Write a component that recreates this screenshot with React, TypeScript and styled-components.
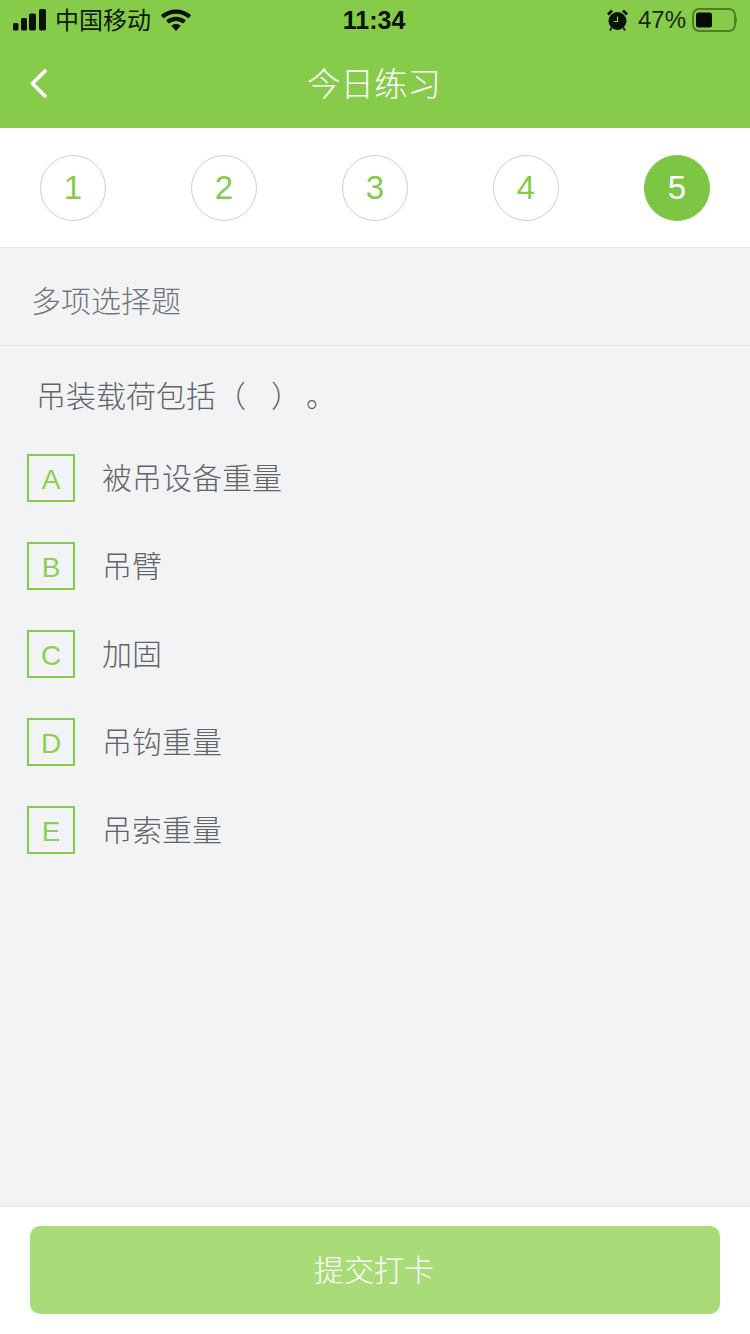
import React from 'react';
import styled, { createGlobalStyle } from 'styled-components';

const GREEN = '#86cc4a';
const FONT = '"Liberation Sans", Arial, "Noto Sans CJK SC", sans-serif';

const GlobalStyle = createGlobalStyle`
    html, body {
        margin: 0;
        padding: 0;
        background: #f2f3f5;
        font-family: ${FONT};
    }
    * {
        box-sizing: border-box;
    }
`;

const Page = styled.div`
    width: 750px;
    height: 1334px;
    display: flex;
    flex-direction: column;
    background: #f2f3f5;
    overflow: hidden;
`;

const Header = styled.header`
    height: 128px;
    flex: none;
    background: ${GREEN};
    display: flex;
    flex-direction: column;
`;

const StatusBar = styled.div`
    height: 40px;
    padding: 0 13px;
    display: grid;
    grid-template-columns: 1fr auto 1fr;
    align-items: center;
    color: #0c1a04;
`;

const StatusLeft = styled.div`
    display: flex;
    align-items: center;
`;

const StatusRight = styled.div`
    display: flex;
    align-items: center;
    justify-content: flex-end;
`;

const Carrier = styled.span`
    font-size: 24px;
    margin: 0 10px 4px 9px;
    font-weight: 400;
`;

const Clock = styled.span`
    font-size: 25px;
    font-weight: 700;
    color: #0a1205;
    margin-right: 2px;
`;

const Percent = styled.span`
    font-size: 24px;
    margin: 0 4px 0 10px;
    color: #16280a;
`;

const TitleBar = styled.div`
    flex: 1;
    display: flex;
    align-items: center;
    justify-content: center;
    padding: 0 2px 6px 0;
    position: relative;
`;

const BackIcon = styled.svg`
    position: absolute;
    left: 28px;
    top: 26px;
`;

const Title = styled.h1`
    margin: 0;
    font-size: 33.5px;
    font-weight: 300;
    color: #fff;
`;

const Steps = styled.div`
    height: 120px;
    flex: none;
    background: #fff;
    border-bottom: 1px solid #e6e7e9;
    padding: 27px 40px 0;
    display: flex;
    justify-content: space-between;
    align-items: flex-start;
`;

const Step = styled.div<{ $active?: boolean }>`
    width: 66px;
    height: 66px;
    border-radius: 50%;
    display: flex;
    align-items: center;
    justify-content: center;
    font-size: 33px;
    color: ${(p) => (p.$active ? '#fff' : '#84ca4c')};
    background: ${(p) => (p.$active ? '#7cc644' : '#fff')};
    border: 1px solid ${(p) => (p.$active ? '#7cc644' : '#cfcfcf')};
`;

const SectionLabel = styled.div`
    height: 98px;
    flex: none;
    padding: 5px 32px 0 31px;
    display: flex;
    align-items: center;
    font-size: 30px;
    font-weight: 300;
    color: #737577;
    border-bottom: 1px solid #e6e7e9;
`;

const Question = styled.div`
    padding: 33px 36px 0;
    height: 108px;
    flex: none;
    font-size: 30px;
    font-weight: 300;
    line-height: 36px;
    color: #626466;
`;

const Stop = styled.span`
    margin-left: 20px;
`;

const Options = styled.div`
    flex: 1;
    padding: 0 27px;
    display: flex;
    flex-direction: column;
    gap: 40px;
`;

const Option = styled.div`
    display: flex;
    align-items: center;
    height: 48px;
`;

const OptionLetter = styled.div`
    width: 48px;
    height: 48px;
    flex: none;
    border: 2px solid #86cc4a;
    padding-top: 4px;
    display: flex;
    align-items: center;
    justify-content: center;
    font-size: 28px;
    color: #8ccf55;
`;

const OptionText = styled.span`
    margin: 0 0 4px 27px;
    font-size: 30px;
    font-weight: 300;
    color: #626466;
`;

const Footer = styled.footer`
    height: 128px;
    flex: none;
    background: #fff;
    border-top: 1px solid #e6e7e9;
    padding: 19px 30px 20px;
`;

const SubmitButton = styled.button`
    width: 100%;
    height: 88px;
    border: none;
    border-radius: 10px;
    padding: 0 2px 4px 0;
    background: #a9dc78;
    color: #fff;
    font-family: ${FONT};
    font-size: 30px;
    font-weight: 300;
`;

const SignalIcon = () => (
    <svg width="33" height="22" viewBox="0 0 33 22">
        <rect x="0" y="14" width="5.5" height="7.5" rx="1.5" fill="#0a1205" />
        <rect x="8" y="9" width="6" height="12.5" rx="1.5" fill="#0a1205" />
        <rect x="16" y="4.5" width="7" height="17" rx="1.8" fill="#0a1205" />
        <rect x="26" y="0" width="7" height="21.5" rx="1.8" fill="#0a1205" />
    </svg>
);

const WifiIcon = () => (
    <svg width="30" height="22" viewBox="0 0 30 22">
        <path d="M1.2 7.8C9 0.8 21 0.8 28.8 7.8" fill="none" stroke="#0a1205" strokeWidth="4.2" />
        <path d="M6.5 13C11.5 8.8 18.5 8.8 23.5 13" fill="none" stroke="#0a1205" strokeWidth="4.2" />
        <path d="M10.2 16.8C13 14.3 17 14.3 19.8 16.8L15 22Z" fill="#0a1205" />
    </svg>
);

const AlarmIcon = () => (
    <svg width="21" height="22" viewBox="0 0 21 22">
        <circle cx="10.5" cy="12" r="9" fill="#0a1205" />
        <path d="M10.5 7.5V12.5H6.5" fill="none" stroke="#86cc4a" strokeWidth="1.2" />
        <path d="M1 5.5L5 1.5M20 5.5L16 1.5" stroke="#0a1205" strokeWidth="2.8" />
        <path d="M4.5 19L3 21.5M16.5 19L18 21.5" stroke="#0a1205" strokeWidth="1.8" />
    </svg>
);

const BatteryIcon = () => (
    <svg width="47" height="24" viewBox="0 0 47 24">
        <rect x="3" y="1" width="42" height="22" rx="6" fill="none" stroke="#4d7f29" strokeWidth="2" />
        <rect x="6" y="4.5" width="16" height="15" rx="2.5" fill="#060a03" />
        <path d="M46.4 9.5C47 10.5 47 13.5 46.4 14.5" fill="none" stroke="#4d7f29" strokeWidth="1.4" />
    </svg>
);

const steps = [1, 2, 3, 4, 5];

const options = [
    { letter: 'A', text: '被吊设备重量' },
    { letter: 'B', text: '吊臂' },
    { letter: 'C', text: '加固' },
    { letter: 'D', text: '吊钩重量' },
    { letter: 'E', text: '吊索重量' },
];

const App = () => {
    return (
        <Page>
            <GlobalStyle />
            <Header>
                <StatusBar>
                    <StatusLeft>
                        <SignalIcon />
                        <Carrier>中国移动</Carrier>
                        <WifiIcon />
                    </StatusLeft>
                    <Clock>11:34</Clock>
                    <StatusRight>
                        <AlarmIcon />
                        <Percent>47%</Percent>
                        <BatteryIcon />
                    </StatusRight>
                </StatusBar>
                <TitleBar>
                    <BackIcon width="22" height="34" viewBox="0 0 22 34">
                        <path d="M17 5L4.5 17.5L17 30" fill="none" stroke="#fff" strokeWidth="3.8" strokeLinecap="round" strokeLinejoin="round" />
                    </BackIcon>
                    <Title>今日练习</Title>
                </TitleBar>
            </Header>
            <Steps>
                {steps.map((n) => (
                    <Step key={n} $active={n === 5}>{n}</Step>
                ))}
            </Steps>
            <SectionLabel>多项选择题</SectionLabel>
            <Question>吊装载荷包括（ &nbsp; ）<Stop>。</Stop></Question>
            <Options>
                {options.map((o) => (
                    <Option key={o.letter}>
                        <OptionLetter>{o.letter}</OptionLetter>
                        <OptionText>{o.text}</OptionText>
                    </Option>
                ))}
            </Options>
            <Footer>
                <SubmitButton>提交打卡</SubmitButton>
            </Footer>
        </Page>
    );
};

export default App;
